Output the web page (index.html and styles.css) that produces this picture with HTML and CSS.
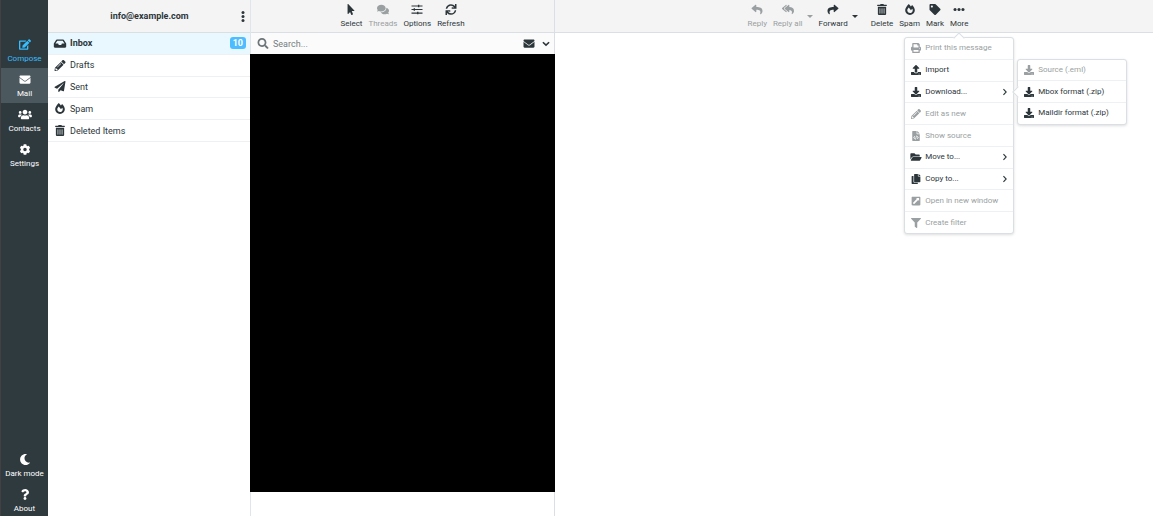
FILE: index.html
```html
<!DOCTYPE html>
<html lang="en">
<head>
<meta charset="utf-8">
<title>Mail</title>
<link rel="stylesheet" href="styles.css">
</head>
<body>
<svg class="sprite" aria-hidden="true">
<symbol id="compose" viewBox="0 0 576 512"><path d="M402.600 83.200l90.200 90.200c3.800 3.800 3.800 10 0 13.800L274.400 405.600l-92.800 10.300c-12.400 1.400-22.900-9.100-21.500-21.500l10.300-92.800L388.800 83.200c3.800-3.800 10-3.800 13.800 0zm162-22.900l-48.800-48.800c-15.200-15.200-39.900-15.200-55.200 0l-35.400 35.400c-3.800 3.800-3.800 10 0 13.800l90.200 90.200c3.800 3.800 10 3.800 13.800 0l35.400-35.400c15.200-15.300 15.200-40 0-55.200zM384 346.200V448H64V128h229.800c3.200 0 6.200-1.300 8.500-3.500l40-40c7.600-7.600 2.200-20.500-8.500-20.500H48C21.500 64 0 85.500 0 112v352c0 26.500 21.500 48 48 48h352c26.500 0 48-21.500 48-48V306.200c0-10.700-12.900-16-20.500-8.500l-40 40c-2.200 2.300-3.500 5.300-3.500 8.500z"/></symbol>
<symbol id="mail" viewBox="0 0 512 512"><path d="M502.300 190.800c3.900-3.100 9.700-.2 9.700 4.700V400c0 26.500-21.500 48-48 48H48c-26.500 0-48-21.500-48-48V195.600c0-5 5.700-7.800 9.700-4.700 22.400 17.400 52.100 39.500 154.100 113.600 21.100 15.400 56.700 47.800 92.200 47.600 35.700.3 72-32.800 92.300-47.600 102-74.100 131.600-96.300 154-113.700zM256 320c23.200.4 56.600-29.200 73.400-41.400 132.700-96.300 142.800-104.700 173.400-128.700 5.800-4.500 9.200-11.500 9.200-18.900v-19c0-26.500-21.500-48-48-48H48C21.500 64 0 85.500 0 112v19c0 7.400 3.400 14.300 9.200 18.900 30.600 23.900 40.700 32.400 173.400 128.700 16.800 12.200 50.200 41.800 73.400 41.400z"/></symbol>
<symbol id="contacts" viewBox="0 0 640 512"><path d="M96 224c35.300 0 64-28.700 64-64s-28.700-64-64-64-64 28.700-64 64 28.700 64 64 64zm448 0c35.300 0 64-28.700 64-64s-28.700-64-64-64-64 28.700-64 64 28.700 64 64 64zm32 32h-64c-17.600 0-33.500 7.100-45.100 18.600 40.300 22.100 68.900 62 75.100 109.400h66c17.700 0 32-14.300 32-32v-32c0-35.300-28.700-64-64-64zm-256 0c61.900 0 112-50.100 112-112S381.900 32 320 32 208 82.100 208 144s50.100 112 112 112zm76.800 32h-8.300c-20.800 10-43.900 16-68.500 16s-47.600-6-68.500-16h-8.300C179.600 288 128 339.600 128 403.200V432c0 26.500 21.500 48 48 48h288c26.500 0 48-21.500 48-48v-28.800c0-63.600-51.600-115.200-115.200-115.200zm-223.700-13.400C161.500 263.100 145.600 256 128 256H64c-35.300 0-64 28.700-64 64v32c0 17.700 14.300 32 32 32h65.900c6.300-47.400 34.900-87.300 75.200-109.400z"/></symbol>
<symbol id="settings" viewBox="0 0 512 512"><path d="M487.400 315.700l-42.600-24.600c4.300-23.200 4.300-47 0-70.200l42.600-24.600c4.900-2.800 7.100-8.600 5.500-14-11.100-35.600-30-67.800-54.700-94.600-3.800-4.100-10-5.100-14.800-2.300L380.800 110c-17.900-15.400-38.500-27.300-60.800-35.100V25.800c0-5.600-3.900-10.500-9.400-11.700-36.700-8.200-74.300-7.800-109.200 0-5.500 1.200-9.400 6.100-9.400 11.700V75c-22.200 7.900-42.800 19.800-60.800 35.100L88.700 85.500c-4.900-2.800-11-1.900-14.800 2.300-24.700 26.700-43.600 58.900-54.700 94.600-1.700 5.400.6 11.200 5.500 14L67.300 221c-4.300 23.200-4.300 47 0 70.200l-42.600 24.600c-4.900 2.800-7.100 8.600-5.500 14 11.100 35.600 30 67.800 54.700 94.600 3.800 4.100 10 5.100 14.800 2.300l42.600-24.600c17.900 15.400 38.500 27.300 60.800 35.100v49.200c0 5.600 3.900 10.500 9.400 11.700 36.700 8.200 74.300 7.800 109.200 0 5.500-1.200 9.400-6.100 9.400-11.700v-49.200c22.200-7.900 42.800-19.800 60.800-35.100l42.600 24.600c4.900 2.800 11 1.900 14.800-2.300 24.700-26.700 43.600-58.900 54.700-94.600 1.500-5.500-.7-11.300-5.600-14.100zM256 336c-44.100 0-80-35.900-80-80s35.900-80 80-80 80 35.900 80 80-35.900 80-80 80z"/></symbol>
<symbol id="moon" viewBox="0 0 512 512"><path d="M283.211 512c78.962 0 151.079-35.925 198.857-94.792 7.068-8.708-.639-21.430-11.562-19.350-124.203 23.654-238.262-71.576-238.262-196.954 0-72.222 38.662-138.635 101.498-174.394 9.686-5.512 7.250-20.197-3.756-22.230A258.156 258.156 0 0 0 283.211 0c-141.309 0-256 114.511-256 256 0 141.309 114.511 256 256 256z"/></symbol>
<symbol id="question" viewBox="0 0 384 512"><path d="M202.021 0C122.202 0 70.503 32.703 29.914 91.026c-7.363 10.580-5.093 25.086 5.178 32.874l43.138 32.709c10.373 7.865 25.132 6.026 33.253-4.148 25.049-31.381 43.630-49.449 82.757-49.449 30.764 0 68.816 19.799 68.816 49.631 0 22.552-18.617 34.134-48.993 51.164-35.423 19.860-82.299 44.576-82.299 106.405V320c0 13.255 10.745 24 24 24h72.471c13.255 0 24-10.745 24-24v-5.773c0-42.860 125.268-44.645 125.268-160.627C377.504 66.256 286.902 0 202.021 0zM192 373.459c-38.196 0-69.271 31.075-69.271 69.271 0 38.195 31.075 69.270 69.271 69.270s69.271-31.075 69.271-69.271-31.075-69.270-69.271-69.270z"/></symbol>
<symbol id="dots-v" viewBox="0 0 192 512"><circle cx="96" cy="72" r="70"/><circle cx="96" cy="256" r="70"/><circle cx="96" cy="440" r="70"/></symbol>
<symbol id="dots-h" viewBox="0 0 512 512"><circle cx="72" cy="256" r="72"/><circle cx="256" cy="256" r="72"/><circle cx="440" cy="256" r="72"/></symbol>
<symbol id="inbox" viewBox="0 0 576 512"><path d="M567.938 243.908L462.250 85.374A48.003 48.003 0 0 0 422.311 64H153.689a48 48 0 0 0-39.938 21.374L8.062 243.908A47.994 47.994 0 0 0 0 270.533V400c0 26.510 21.490 48 48 48h480c26.510 0 48-21.490 48-48V270.533a47.994 47.994 0 0 0-8.062-26.625zM162.252 128h251.497l85.333 128H376l-32 64H232l-32-64H76.918l85.334-128z"/></symbol>
<symbol id="pencil" viewBox="0 0 512 512"><path d="M497.900 142.100l-46.100 46.100c-4.700 4.700-12.300 4.700-17 0l-111-111c-4.700-4.700-4.700-12.300 0-17l46.100-46.100c18.700-18.700 49.100-18.700 67.900 0l60.100 60.100c18.800 18.700 18.800 49.100 0 67.900zM284.200 99.800L21.600 362.400.4 483.900c-2.900 16.400 11.400 30.600 27.800 27.800l121.500-21.300 262.600-262.600c4.700-4.700 4.700-12.300 0-17l-111-111c-4.800-4.700-12.400-4.700-17.100 0zM124.100 339.900c-5.500-5.500-5.500-14.300 0-19.800l154-154c5.500-5.500 14.300-5.500 19.800 0s5.500 14.300 0 19.800l-154 154c-5.500 5.500-14.300 5.500-19.800 0zM88 424h48v36.300l-64.500 11.300-31.100-31.100L51.700 376H88v48z"/></symbol>
<symbol id="plane" viewBox="0 0 512 512"><path d="M476 3.200L12.500 270.600c-18.100 10.400-15.800 35.600 2.200 43.200L121 358.400l287.300-253.200c5.500-4.900 13.300 2.600 8.600 8.300L176 407v80.500c0 23.600 28.500 32.900 42.500 15.800L282 426l124.600 52.200c14.200 6 30.400-2.900 33-18.200l72-432C515 7.800 493.300-6.800 476 3.200z"/></symbol>
<symbol id="fire" viewBox="0 0 448 512"><path d="M323.560 51.200c-20.800 19.300-39.580 39.590-56.220 59.970C240.080 73.620 206.280 35.530 168 0 69.740 91.170 0 209.960 0 281.600 0 408.850 100.290 512 224 512s224-103.150 224-230.400c0-53.270-51.980-163.140-124.440-230.400zm-19.470 340.650C282.430 407.010 255.720 416 226.860 416 154.710 416 96 368.260 96 290.750c0-38.610 24.310-72.630 72.790-130.750 6.930 7.980 98.830 125.340 98.830 125.340l58.630-66.880c4.140 6.850 7.910 13.550 11.270 19.970 27.350 52.190 15.810 118.970-33.430 153.420z"/></symbol>
<symbol id="trash" viewBox="0 0 448 512"><path d="M32 464a48 48 0 0 0 48 48h288a48 48 0 0 0 48-48V128H32zm272-256a16 16 0 0 1 32 0v224a16 16 0 0 1-32 0zm-96 0a16 16 0 0 1 32 0v224a16 16 0 0 1-32 0zm-96 0a16 16 0 0 1 32 0v224a16 16 0 0 1-32 0zM432 32H312l-9.400-18.700A24 24 0 0 0 281.100 0H166.800a23.720 23.720 0 0 0-21.400 13.300L136 32H16A16 16 0 0 0 0 48v32a16 16 0 0 0 16 16h416a16 16 0 0 0 16-16V48a16 16 0 0 0-16-16z"/></symbol>
<symbol id="pointer" viewBox="0 0 320 512"><path d="M302.189 329.126H196.105l55.831 135.993c3.889 9.428-.555 19.999-9.444 23.999l-49.165 21.427c-9.165 4-19.443-.571-23.332-9.714l-53.053-129.136-86.664 89.138C18.729 472.710 0 463.554 0 447.977V18.299C0 1.899 19.921-6.096 30.277 5.443l284.412 292.542c11.472 11.179 3.007 31.141-12.500 31.141z"/></symbol>
<symbol id="threads" viewBox="0 0 576 512"><path d="M416 192c0-88.400-93.100-160-208-160S0 103.600 0 192c0 34.300 14.100 65.900 38 92-13.400 30.200-35.500 54.200-35.800 54.500-2.200 2.300-2.800 5.700-1.500 8.700S4.800 352 8 352c36.600 0 66.900-12.300 88.700-25 32.200 15.700 70.300 25 111.300 25 114.900 0 208-71.600 208-160zm122 220c23.900-26 38-57.700 38-92 0-66.900-53.500-124.200-129.300-148.100.9 6.600 1.300 13.300 1.300 20.100 0 105.900-107.700 192-240 192-10.800 0-21.300-.8-31.700-1.900C207.800 439.600 281.800 480 368 480c41 0 79.100-9.200 111.300-25 21.800 12.700 52.100 25 88.700 25 3.200 0 6.100-1.900 7.300-4.800 1.300-2.900.7-6.300-1.500-8.700-.3-.3-22.400-24.200-35.800-54.500z"/></symbol>
<symbol id="options" viewBox="0 0 512 512"><path d="M0 64h300V32h64v32h148v52H364v32h-64v-32H0zM0 230h100v-32h64v32h348v52H164v32h-64v-32H0zM0 396h260v-32h64v32h188v52H324v32h-64v-32H0z"/></symbol>
<symbol id="refresh" viewBox="0 0 512 512"><path d="M440.650 12.570l4 82.770A247.160 247.160 0 0 0 255.830 8C134.730 8 33.910 94.920 12.290 209.820A12 12 0 0 0 24.090 224h49.050a12 12 0 0 0 11.670-9.260 175.910 175.910 0 0 1 317-56.940l-101.460-4.860a12 12 0 0 0-12.570 12v47.410a12 12 0 0 0 12 12H500a12 12 0 0 0 12-12V12a12 12 0 0 0-12-12h-47.370a12 12 0 0 0-11.980 12.570zM255.830 432a175.610 175.610 0 0 1-146-77.800l101.800 4.870a12 12 0 0 0 12.570-12v-47.400a12 12 0 0 0-12-12H12a12 12 0 0 0-12 12V500a12 12 0 0 0 12 12h47.350a12 12 0 0 0 12-12.600l-4.150-82.570A247.170 247.170 0 0 0 255.830 504c121.110 0 221.930-86.920 243.550-201.820a12 12 0 0 0-11.800-14.180h-49.050a12 12 0 0 0-11.670 9.260A175.860 175.860 0 0 1 255.830 432z"/></symbol>
<symbol id="search" viewBox="0 0 512 512"><path d="M505 442.700L405.300 343c-4.500-4.500-10.600-7-17-7H372c27.600-35.300 44-79.700 44-128C416 93.100 322.900 0 208 0S0 93.100 0 208s93.100 208 208 208c48.300 0 92.700-16.400 128-44v16.300c0 6.400 2.500 12.500 7 17l99.700 99.700c9.400 9.400 24.600 9.400 33.900 0l28.300-28.300c9.400-9.400 9.400-24.600.1-34zM208 336c-70.700 0-128-57.200-128-128 0-70.700 57.200-128 128-128 70.700 0 128 57.200 128 128 0 70.700-57.200 128-128 128z"/></symbol>
<symbol id="chev-down" viewBox="0 0 448 512"><path d="M50 185l174 165 174-165" fill="none" stroke="currentColor" stroke-width="90"/></symbol>
<symbol id="chev-right" viewBox="0 0 320 512"><path d="M80 110l140 146L80 402" fill="none" stroke="currentColor" stroke-width="56"/></symbol>
<symbol id="reply" viewBox="0 0 512 512"><path d="M8.309 189.836L184.313 37.851C199.719 24.546 224 35.347 224 56.015v80.053c160.629 1.839 288 34.032 288 186.258 0 61.441-39.581 122.309-83.333 154.132-13.653 9.931-33.111-2.533-28.077-18.631 45.344-145.012-21.507-183.510-176.590-185.742V360c0 20.700-24.300 31.453-39.687 18.164l-176.004-152c-11.071-9.562-11.086-26.753 0-36.328z"/></symbol>
<symbol id="reply-all" viewBox="0 0 576 512"><path d="M136.309 189.836L312.313 37.851C327.720 24.546 352 35.348 352 56.015v82.763c129.182 10.231 224 52.212 224 183.548 0 61.441-39.582 122.309-83.333 154.132-13.653 9.931-33.111-2.533-28.077-18.631 38.512-123.162-3.922-169.482-112.590-182.015v84.175c0 20.701-24.300 31.453-39.687 18.164L136.309 226.164c-11.071-9.561-11.086-26.753 0-36.328zm-128 36.328L184.313 378.150C199.700 391.439 224 380.687 224 359.986v-15.818l-108.606-93.785A55.960 55.960 0 0 1 96 207.998a55.953 55.953 0 0 1 19.393-42.380L224 71.832V56.015c0-20.667-24.280-31.469-39.687-18.164L8.309 189.836c-11.086 9.575-11.071 26.767 0 36.328z"/></symbol>
<symbol id="forward" viewBox="0 0 512 512"><path d="M503.691 189.836L327.687 37.851C312.281 24.546 288 35.347 288 56.015v80.053C127.371 137.907 0 170.100 0 322.326c0 61.441 39.581 122.309 83.333 154.132 13.653 9.931 33.111-2.533 28.077-18.631C66.066 312.814 132.917 274.316 288 272.085V360c0 20.700 24.300 31.453 39.687 18.164l176.004-152c11.071-9.562 11.086-26.753 0-36.328z"/></symbol>
<symbol id="tag" viewBox="0 0 512 512"><path d="M0 252.118V48C0 21.490 21.490 0 48 0h204.118a48 48 0 0 1 33.941 14.059l211.882 211.882c18.745 18.745 18.745 49.137 0 67.882L293.823 497.941c-18.745 18.745-49.137 18.745-67.882 0L14.059 286.059A48 48 0 0 1 0 252.118zM112 64c-26.510 0-48 21.490-48 48s21.490 48 48 48 48-21.490 48-48-21.490-48-48-48z"/></symbol>
<symbol id="print" viewBox="0 0 512 512"><path d="M448 192V77.250c0-8.490-3.370-16.620-9.370-22.630L393.370 9.370c-6-6-14.140-9.370-22.630-9.370H96C78.330 0 64 14.330 64 32v160c-35.350 0-64 28.650-64 64v112c0 8.840 7.160 16 16 16h48v96c0 17.670 14.330 32 32 32h320c17.670 0 32-14.330 32-32v-96h48c8.840 0 16-7.160 16-16V256c0-35.350-28.650-64-64-64zm-64 256H128v-96h256v96zm0-224H128V64h192v48c0 8.840 7.160 16 16 16h48v96zm48 72c-13.250 0-24-10.750-24-24 0-13.260 10.750-24 24-24s24 10.740 24 24c0 13.250-10.750 24-24 24z"/></symbol>
<symbol id="upload" viewBox="0 0 512 512"><path d="M296 384h-80c-13.300 0-24-10.700-24-24V192h-87.700c-17.800 0-26.700-21.500-14.100-34.100L242.300 5.700c7.500-7.500 19.800-7.500 27.300 0l152.200 152.200c12.600 12.600 3.700 34.100-14.100 34.100H320v168c0 13.300-10.700 24-24 24zm216-8v112c0 13.300-10.700 24-24 24H24c-13.300 0-24-10.700-24-24V376c0-13.300 10.700-24 24-24h136v8c0 30.900 25.100 56 56 56h80c30.900 0 56-25.100 56-56v-8h136c13.300 0 24 10.700 24 24zm-124 88c0-11-9-20-20-20s-20 9-20 20 9 20 20 20 20-9 20-20zm64 0c0-11-9-20-20-20s-20 9-20 20 9 20 20 20 20-9 20-20z"/></symbol>
<symbol id="download" viewBox="0 0 512 512"><path d="M216 0h80c13.300 0 24 10.700 24 24v168h87.700c17.800 0 26.700 21.500 14.100 34.100L269.700 378.300c-7.500 7.500-19.800 7.500-27.300 0L90.100 226.100c-12.600-12.600-3.700-34.100 14.100-34.100H192V24c0-13.300 10.700-24 24-24zm296 376v112c0 13.300-10.700 24-24 24H24c-13.300 0-24-10.700-24-24V376c0-13.300 10.700-24 24-24h146.700l49 49c20.100 20.100 52.500 20.100 72.600 0l49-49H488c13.300 0 24 10.700 24 24zm-124 88c0-11-9-20-20-20s-20 9-20 20 9 20 20 20 20-9 20-20zm64 0c0-11-9-20-20-20s-20 9-20 20 9 20 20 20 20-9 20-20z"/></symbol>
<symbol id="source" viewBox="0 0 384 512"><path fill-rule="evenodd" d="M24 0h200v136c0 13 11 24 24 24h136v328c0 13-11 24-24 24H24c-13 0-24-11-24-24V24C0 11 11 0 24 0zm232 0h6l122 122v6H256zM125 255l-75 80 75 80 24-25-50-55 50-55zm134 0l-24 25 50 55-50 55 24 25 75-80zm-55-30l-56 210 32 9 56-210z"/></symbol>
<symbol id="folder" viewBox="0 0 576 512"><path d="M572.694 292.093L500.270 416.248A63.997 63.997 0 0 1 444.989 448H45.025c-18.523 0-30.064-20.093-20.731-36.093l72.424-124.155A64 64 0 0 1 152 256h399.964c18.523 0 30.064 20.093 20.730 36.093zM152 224h328v-48c0-26.510-21.490-48-48-48H272l-64-64H48C21.490 64 0 85.490 0 112v278.046l69.077-118.418C86.214 242.250 117.989 224 152 224z"/></symbol>
<symbol id="copy" viewBox="0 0 448 512"><path d="M320 448v40c0 13.255-10.745 24-24 24H24c-13.255 0-24-10.745-24-24V120c0-13.255 10.745-24 24-24h72v296c0 30.879 25.121 56 56 56h168zm0-344V0H152c-13.255 0-24 10.745-24 24v368c0 13.255 10.745 24 24 24h272c13.255 0 24-10.745 24-24V128H344c-13.200 0-24-10.800-24-24zm120.971-31.029L375.029 7.029A24 24 0 0 0 358.059 0H352v96h96v-6.059a24 24 0 0 0-7.029-16.970z"/></symbol>
<symbol id="external" viewBox="0 0 448 512"><path fill-rule="evenodd" d="M48 32h352c26 0 48 22 48 48v352c0 26-22 48-48 48H48c-26 0-48-22-48-48V80c0-26 22-48 48-48zm174 64l50 50L74 344c-8 8-8 20 0 28l34 34c8 8 20 8 28 0l198-198 50 50V112c0-9-7-16-16-16z"/></symbol>
<symbol id="filter" viewBox="0 0 512 512"><path d="M487.976 0H24.028C2.710 0-8.047 25.866 7.058 40.971L192 225.941V432c0 7.831 3.821 15.170 10.237 19.662l80 55.980C298.020 518.690 320 507.493 320 487.980V225.941l184.947-184.970C520.021 25.896 509.338 0 487.976 0z"/></symbol>
</svg>

<div class="layout">
  <nav class="taskbar" aria-label="Tasks">
    <a class="task compose" href="#compose"><svg class="icon"><use href="#compose"/></svg>Compose</a>
    <a class="task selected" href="#mail"><svg class="icon"><use href="#mail"/></svg>Mail</a>
    <a class="task" href="#contacts"><svg class="icon wide"><use href="#contacts"/></svg>Contacts</a>
    <a class="task" href="#settings"><svg class="icon"><use href="#settings"/></svg>Settings</a>
    <div class="spacer"></div>
    <a class="task secondary" href="#dark"><svg class="icon"><use href="#moon"/></svg>Dark mode</a>
    <a class="task secondary" href="#about"><svg class="icon"><use href="#question"/></svg>About</a>
  </nav>

  <section class="folders">
    <header class="bar account">
      <span class="address">info@example.com</span>
      <button class="kebab" aria-label="Folder actions"><svg class="icon"><use href="#dots-v"/></svg></button>
    </header>
    <ul class="folder-list">
      <li><a class="folder selected" href="#inbox"><svg class="icon wide"><use href="#inbox"/></svg>Inbox<span class="badge">10</span></a></li>
      <li><a class="folder" href="#drafts"><svg class="icon"><use href="#pencil"/></svg>Drafts</a></li>
      <li><a class="folder" href="#sent"><svg class="icon"><use href="#plane"/></svg>Sent</a></li>
      <li><a class="folder" href="#spam"><svg class="icon"><use href="#fire"/></svg>Spam</a></li>
      <li><a class="folder" href="#deleted"><svg class="icon"><use href="#trash"/></svg>Deleted Items</a></li>
    </ul>
  </section>

  <section class="messages">
    <header class="bar toolbar">
      <button class="tool"><svg class="icon"><use href="#pointer"/></svg>Select</button>
      <button class="tool" disabled><svg class="icon"><use href="#threads"/></svg>Threads</button>
      <button class="tool"><svg class="icon"><use href="#options"/></svg>Options</button>
      <button class="tool"><svg class="icon"><use href="#refresh"/></svg>Refresh</button>
    </header>
    <form class="search">
      <label class="search-label" for="q" aria-label="Search"><svg class="icon"><use href="#search"/></svg></label>
      <input class="search-input" id="q" type="text" placeholder="Search...">
      <button class="search-button" type="button" aria-label="Unread"><svg class="icon"><use href="#mail"/></svg></button>
      <button class="search-button" type="button" aria-label="Search options"><svg class="icon small"><use href="#chev-down"/></svg></button>
    </form>
    <div class="message-list"></div>
  </section>

  <main class="content">
    <header class="bar toolbar message-toolbar">
      <button class="tool" disabled><svg class="icon"><use href="#reply"/></svg>Reply</button>
      <div class="split">
        <button class="tool" disabled><svg class="icon"><use href="#reply-all"/></svg>Reply all</button>
        <button class="caret" disabled aria-label="Reply all options"></button>
      </div>
      <div class="split">
        <button class="tool"><svg class="icon"><use href="#forward"/></svg>Forward</button>
        <button class="caret" aria-label="Forward options"></button>
      </div>
      <button class="tool group-start"><svg class="icon"><use href="#trash"/></svg>Delete</button>
      <button class="tool"><svg class="icon"><use href="#fire"/></svg>Spam</button>
      <button class="tool"><svg class="icon"><use href="#tag"/></svg>Mark</button>
      <div class="more">
        <button class="tool"><svg class="icon"><use href="#dots-h"/></svg>More</button>
        <ul class="menu main-menu">
          <li><button class="item" disabled><svg class="icon"><use href="#print"/></svg>Print this message</button></li>
          <li><button class="item"><svg class="icon"><use href="#upload"/></svg>Import</button></li>
          <li class="has-submenu"><button class="item"><svg class="icon"><use href="#download"/></svg>Download...<svg class="icon arrow"><use href="#chev-right"/></svg></button>
            <ul class="menu submenu">
              <li><button class="item" disabled><svg class="icon"><use href="#download"/></svg>Source (.eml)</button></li>
              <li><button class="item"><svg class="icon"><use href="#download"/></svg>Mbox format (.zip)</button></li>
              <li><button class="item"><svg class="icon"><use href="#download"/></svg>Maildir format (.zip)</button></li>
            </ul>
          </li>
          <li><button class="item" disabled><svg class="icon"><use href="#pencil"/></svg>Edit as new</button></li>
          <li><button class="item" disabled><svg class="icon"><use href="#source"/></svg>Show source</button></li>
          <li><button class="item"><svg class="icon"><use href="#folder"/></svg>Move to...<svg class="icon arrow"><use href="#chev-right"/></svg></button></li>
          <li><button class="item"><svg class="icon"><use href="#copy"/></svg>Copy to...<svg class="icon arrow"><use href="#chev-right"/></svg></button></li>
          <li><button class="item" disabled><svg class="icon"><use href="#external"/></svg>Open in new window</button></li>
          <li><button class="item" disabled><svg class="icon"><use href="#filter"/></svg>Create filter</button></li>
        </ul>
      </div>
    </header>
  </main>
</div>
</body>
</html>
```
FILE: styles.css
```css
* { box-sizing: border-box; }
body {
  margin: 0;
  font: 8px/12px Roboto, "Liberation Sans", sans-serif;
  color: #2c363a;
}
ul { list-style: none; margin: 0; padding: 0; }
a { color: inherit; text-decoration: none; }
button, input { font: inherit; }
button { color: inherit; background: none; border: 0; padding: 0; }
.sprite { position: absolute; width: 0; height: 0; }
.icon { width: 12px; height: 11px; fill: currentColor; flex: none; }
.icon.wide { width: 14px; }
.icon.small { width: 8px; }

.layout { display: flex; height: 100vh; }

.taskbar {
  width: 48px;
  flex: none;
  display: flex;
  flex-direction: column;
  padding-top: 33px;
  background: #2f3a3f;
  border-left: 1px solid #443f42;
  color: #fff;
}
.task {
  height: 35px;
  display: flex;
  flex-direction: column;
  align-items: center;
  justify-content: center;
  gap: 3px;
  padding-top: 2px;
  white-space: nowrap;
}
.task.compose { color: #37beff; }
.task.selected { background: #4b585e; }
.task.secondary { padding-top: 6px; }
.spacer { flex: 1; }

.bar {
  height: 33px;
  flex: none;
  background: #f4f4f4;
  border-bottom: 1px solid #d9dfe3;
}

.folders { width: 203px; flex: none; border-right: 1px solid #dfe6ea; }
.account { display: flex; align-items: center; padding: 0 1px 0 14px; }
.address { flex: 1; text-align: center; font-size: 9px; font-weight: 700; }
.kebab { display: flex; }
.folder-list { display: flex; flex-direction: column; min-height: 109px; }
.folder-list > li { flex: 1; display: flex; }
.folder {
  flex: 1;
  display: flex;
  align-items: center;
  padding: 0 4px 0 5px;
  border-bottom: 1px solid #eef1f3;
  font-size: 9px;
}
.folder .icon { width: 14px; margin-right: 3px; }
.folder.selected { background: #e9f7ff; font-weight: 700; }
.badge {
  margin-left: auto;
  padding: 0 3px;
  border-radius: 3px;
  background: #4dbdff;
  color: #fff;
}

.messages {
  width: 304px;
  flex: none;
  display: flex;
  flex-direction: column;
  border-right: 1px solid #d9dfe3;
}
.toolbar { display: flex; justify-content: center; gap: 6px; }
.message-toolbar { padding-left: 8px; }
.tool {
  display: flex;
  flex-direction: column;
  align-items: center;
  gap: 3px;
  padding-top: 4px;
  white-space: nowrap;
}
:disabled { color: #9a9fa1; }
.search {
  display: flex;
  align-items: center;
  gap: 4px;
  height: 21px;
  padding: 0 4px 0 6px;
  background: #fbfbfb;
}
.search-label, .search-button { display: flex; color: #6d7579; }
.search-button { color: #2c363a; margin-left: 3px; }
.search-input {
  flex: 1;
  min-width: 0;
  padding: 0;
  border: 0;
  background: none;
  font-size: 9px;
}
.search-input::placeholder { color: #777d80; }
.message-list { flex: 1; margin: 0 -1px 24px; background: #000; }

.content { flex: 1; }
.split { display: flex; align-items: center; gap: 4px; }
.split .tool { align-self: flex-start; }
.caret {
  border: 3px solid transparent;
  border-top-color: currentColor;
  border-bottom: 0;
}
.group-start { margin-left: 7px; }

.more { position: relative; }
.menu {
  position: absolute;
  z-index: 1;
  width: 110px;
  display: flex;
  flex-direction: column;
  background: #fff;
  border: 1px solid #d9dfe3;
  border-radius: 3px;
  box-shadow: 0 1px 3px #0002;
}
.menu::before {
  content: "";
  position: absolute;
  width: 7px;
  height: 7px;
  background: #fff;
  border: 1px solid #d9dfe3;
  border-right: 0;
  border-bottom: 0;
}
.main-menu { top: 37px; left: calc(50% - 55px); min-height: 197px; }
.main-menu::before { top: -4px; left: 50px; transform: rotate(45deg); }
.submenu { top: -23px; left: calc(100% + 4px); min-height: 66px; }
.submenu::before { top: 28px; left: -4px; transform: rotate(-45deg); }
.menu > li { flex: 1; display: flex; }
.menu > li + li { border-top: 1px solid #eef1f3; }
.has-submenu { position: relative; }
.item {
  flex: 1;
  display: flex;
  align-items: center;
  padding: 0 4px 0 5px;
  white-space: nowrap;
}
.item .icon { height: 10px; margin-right: 3px; }
.item .arrow { width: 8px; margin: 0 0 0 auto; }
```
